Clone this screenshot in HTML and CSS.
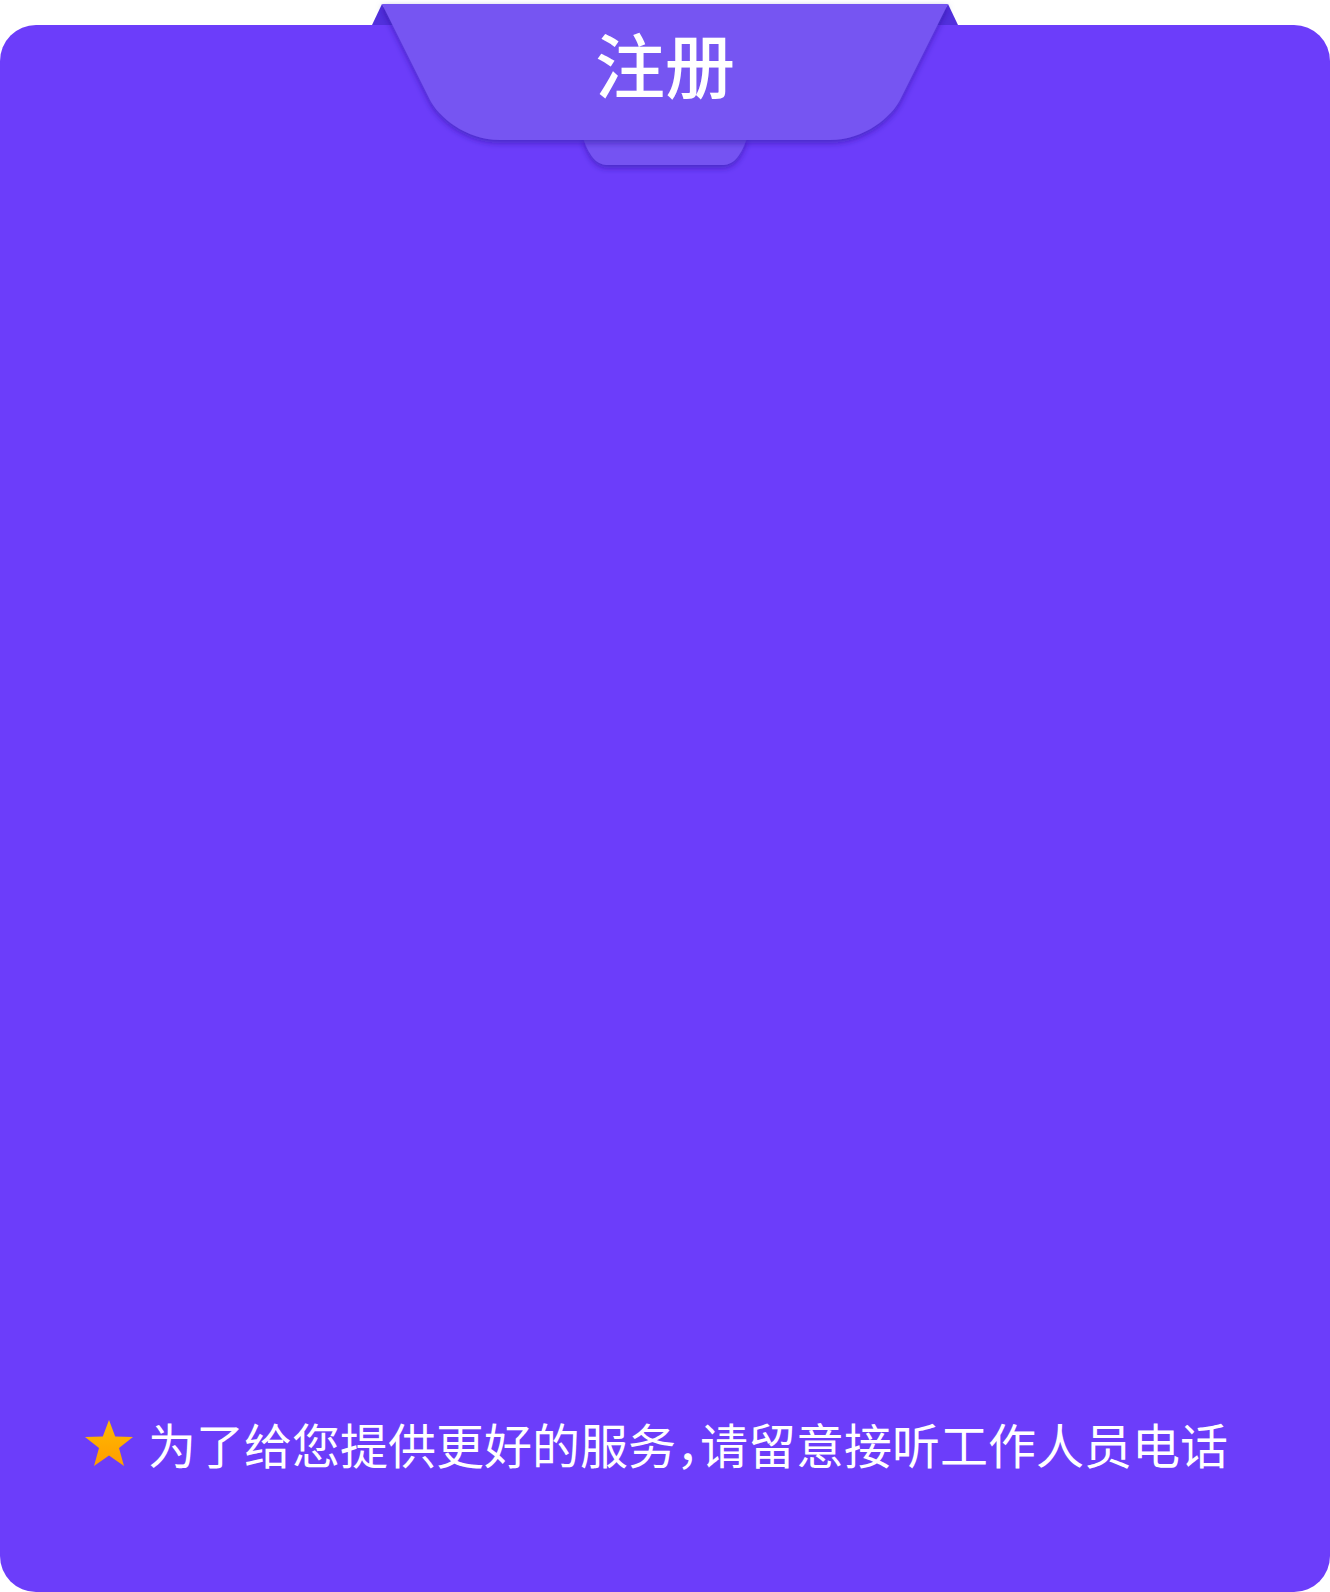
FILE: index.html
```html
<!DOCTYPE html>
<html lang="zh-CN">
<head>
<meta charset="utf-8">
<title>注册</title>
<link rel="stylesheet" href="styles.css">
</head>
<body>
<main class="card">
  <header class="tab">
    <svg class="tab-shape" viewBox="362 0 606 180" width="606" height="180" aria-hidden="true">
      <defs>
        <filter id="sh" x="-10%" y="-20%" width="120%" height="150%">
          <feDropShadow dx="0" dy="3" stdDeviation="3" flood-color="#2a0a9a" flood-opacity="0.55"/>
        </filter>
      </defs>
      <polygon points="372,25 382,4 396,25" fill="#5230dc"/>
      <polygon points="958,25 948,4 934,25" fill="#5230dc"/>
      <path d="M583,138 H747 C740,158 733,165 722,165 H608 C597,165 590,158 583,138 Z" fill="#7452f2" filter="url(#sh)"/>
      <path d="M382,4 H948 L900,100 C892,116 865,140 830,140 H500 C465,140 438,116 430,100 Z" fill="#7654f2" filter="url(#sh)"/>
    </svg>
    <h1 class="tab-title">注册</h1>
  </header>
  <p class="notice">
    <svg class="star" viewBox="0 0 48 46" width="48" height="46" aria-hidden="true">
      <defs>
        <linearGradient id="sg" x1="0" y1="0" x2="0" y2="1">
          <stop offset="0" stop-color="#ffbb00"/>
          <stop offset="1" stop-color="#ff9d00"/>
        </linearGradient>
      </defs>
      <polygon points="24,0 30.2,16.5 48,17 34,28 39,46 24,35.5 9,46 14,28 0,17 17.8,16.5" fill="url(#sg)"/>
    </svg>
    <span class="notice-text">为了给您提供更好的服务<span class="comma">，</span>请留意接听工作人员电话</span>
  </p>
</main>
</body>
</html>
```

FILE: styles.css
```css
html, body {
  margin: 0;
  padding: 0;
  background: #ffffff;
}

body {
  font-family: "Noto Sans CJK SC", "Noto Sans", sans-serif;
  padding-top: 25px;
}

.card {
  position: relative;
  box-sizing: border-box;
  width: 1330px;
  height: 1567px;
  background: #6c3dfa;
  border-radius: 36px;
  display: flex;
  flex-direction: column;
  justify-content: flex-end;
  padding: 0 0 121px 85px;
}

.tab {
  position: absolute;
  top: -25px;
  left: 362px;
  width: 606px;
  height: 180px;
}

.tab-shape {
  position: absolute;
  left: 0;
  top: 0;
  display: block;
}

.tab-title {
  position: relative;
  margin: 0;
  padding-top: 28px;
  font-size: 70px;
  line-height: 70px;
  font-weight: 500;
  color: #ffffff;
  text-align: center;
  letter-spacing: 0;
}

.notice {
  margin: 0;
  display: flex;
  align-items: center;
  gap: 15px;
  color: #ffffff;
}

.star {
  display: block;
  flex: none;
}

.notice-text {
  font-size: 48px;
  line-height: 56px;
  font-weight: 400;
  white-space: nowrap;
}

.comma {
  font-feature-settings: "halt" 1;
}
```
